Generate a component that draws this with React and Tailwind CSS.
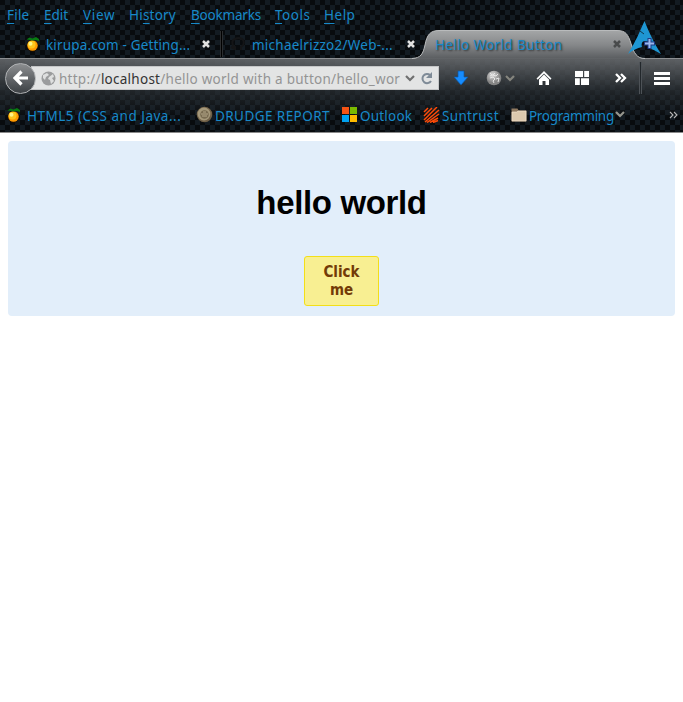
import React from "react";

const MENUS = [
  ["", "F", "ile", "w-[37px] tracking-[0.2px]"],
  ["", "E", "dit", "w-[39px]"],
  ["", "V", "iew", "w-[46px] tracking-[0.7px]"],
  ["Hi", "s", "tory", "w-[62px] tracking-[0.2px]"],
  ["", "B", "ookmarks", "w-[84px] tracking-[-0.2px]"],
  ["", "T", "ools", "w-[49px] tracking-[0.5px]"],
  ["", "H", "elp", "w-[40px] tracking-[0.5px]"],
];

function Orange() {
  return (
    <svg width="16" height="16" viewBox="0 0 16 16" className="shrink-0">
      <circle cx="6.500" cy="9.800" r="5.900" fill="#201000" />
      <circle cx="6.500" cy="9.500" r="5.200" fill="#ff9a00" />
      <circle cx="5.600" cy="8.600" r="3.900" fill="#ffc61c" />
      <circle cx="4.500" cy="7.800" r="2" fill="#fff48a" />
      <path d="M.500 3.500 3.500 1.500l3 1L10 1l3 2v2l-3-1-3 .5L4 4z" fill="#087a12" />
    </svg>
  );
}

function Close({ color }) {
  return (
    <svg width="8" height="8" viewBox="0 0 8 8" className="shrink-0">
      <path d="m1 1 6 6M7 1 1 7" stroke={color} strokeWidth="2.5" />
    </svg>
  );
}

function Chevron({ color }) {
  return (
    <svg width="10" height="7" viewBox="0 0 10 7" className="shrink-0">
      <path d="m1 1 4 4 4-4" fill="none" stroke={color} strokeWidth="2.2" />
    </svg>
  );
}

function Tabs() {
  return (
    <div className="flex h-[29px] items-center border-b border-[#8d8f91]">
      <div className="flex h-full w-[220px] items-center pl-[26px]">
        <Orange />
        <span className="ml-[4px] w-[156px] whitespace-nowrap pt-[2px] text-[13.5px] leading-[20px] tracking-[0.15px]">kirupa.com - Getting...</span>
        <Close color="#e2e2e2" />
      </div>
      <span className="h-[26px] w-[3px] border-x border-[#4a4d5099] bg-black" />
      <div className="flex h-full w-[196px] items-center pl-[7px]">
        <svg width="16" height="16" viewBox="0 0 16 16" className="shrink-0">
          <path d="M5 14v-3c-3-1-4-7 0-8 2-1 5-1 7 0 3 2 2 7-1 8v3M1 11l4 2" fill="none" stroke="#141517" strokeWidth="2" />
        </svg>
        <span className="ml-[6px] w-[155px] whitespace-nowrap pt-[2px] text-[13.5px] leading-[20px] tracking-[0.25px]">michaelrizzo2/Web-...</span>
        <Close color="#e2e2e2" />
      </div>
      <div className="relative flex h-full w-[228px] items-center pl-[16px]">
        <svg width="236" height="30" viewBox="0 0 236 30" className="absolute left-[-7px] top-0">
          <defs>
            <linearGradient id="tab" x1="0" y1="0" x2="0" y2="1">
              <stop offset="0" stopColor="#a4a6a7" />
              <stop offset=".5" stopColor="#858789" />
              <stop offset="1" stopColor="#5a5d60" stopOpacity=".95" />
            </linearGradient>
          </defs>
          <path d="M0 29C9 28 11 24 13 15 15 5 18 .5 27 .5H205c9 0 11 4 14 13 3 10 6 15 14 15.500V30H0z" fill="url(#tab)" />
          <path d="M0 28.500C9 28 11 24 13 15 15 5 18 .5 27 .5H205c9 0 11 4 14 13 3 10 6 15 14 15" fill="none" stroke="#b9bbbc" />
        </svg>
        <span className="relative w-[178px] whitespace-nowrap pt-[2px] text-[13.5px] leading-[20px] tracking-[0.36px] [text-shadow:1px_1px_2px_#303030]">Hello World Button</span>
        <span className="relative flex"><Close color="#494b4c" /></span>
        <svg width="34" height="34" viewBox="0 0 34 34" className="absolute left-[209px] top-[-9px]">
          <path d="M16.500 0c4 10 9 21 16.500 33-5-3-9-5-12-6 2-4 0-7-4-7-3 0-4 3-3 6-5 1-9 3-14 7C7 22 12 10 16.500 0z" fill="#1e96d3" />
          <path d="m12 10 4 3" stroke="#11364b" />
          <path d="M21.500 17v11M16 22.500h11" stroke="#1e3b86" strokeWidth="4" />
          <path d="M21.500 18v9M17 22.500h9" stroke="#9bb7ed" strokeWidth="2" />
        </svg>
      </div>
    </div>
  );
}

function Navigation() {
  return (
    <div className="flex h-[38px] items-center pl-[5px]">
      <span className="z-10 flex size-[31px] shrink-0 items-center justify-center rounded-full border border-[#b0b2b4] bg-linear-to-b from-[#8c8e90] to-[#3d4145]">
        <svg width="16" height="16" viewBox="0 0 16 16">
          <path d="M8.500 1.500 2 8l6.500 6.500M2.500 8H15" fill="none" stroke="#fff" strokeWidth="3.200" />
        </svg>
      </span>
      <div className="ml-[-5px] flex h-[24px] w-[408px] shrink-0 items-center border border-[#c5c6c7] bg-[#e3e4e4] pl-[9px]">
        <svg width="15" height="15" viewBox="0 0 15 15" className="shrink-0">
          <circle cx="7.500" cy="7.500" r="7" fill="#9b9c9d" />
          <path d="M2 4l4-2 2 2-3 2-1 3-2-2zM8 6l4-3 1 3-2 1 2 3-3 3-1-4-2-1z" fill="#dedfdf" />
        </svg>
        <span className="ml-[3px] w-[343px] overflow-hidden whitespace-nowrap pt-[2px] text-[13.5px] leading-[20px] tracking-[0.26px] text-[#949494]">
          http://<span className="text-[#333]">localhost</span>/hello world with a button/hello_wor
        </span>
        <span className="ml-[3px] flex"><Chevron color="#707070" /></span>
        <svg width="13" height="13" viewBox="0 0 13 13" className="ml-[5px] shrink-0">
          <path d="M10.200 3.200A4.600 4.600 0 1 0 11 9" fill="none" stroke="#7f8b97" strokeWidth="2" />
          <path d="M12 0v6H6z" fill="#7f8b97" />
        </svg>
      </div>
      <svg width="16" height="16" viewBox="0 0 16 16" className="ml-[14px] shrink-0">
        <path d="M5 1h6v6h4l-7 8-7-8h4z" fill="#168cff" stroke="#0b58a5" strokeWidth=".7" />
      </svg>
      <svg width="16" height="16" viewBox="0 0 16 16" className="ml-[17px] shrink-0">
        <defs>
          <radialGradient id="globe" cx=".4" cy=".3">
            <stop stopColor="#e0e0e0" />
            <stop offset="1" stopColor="#858585" />
          </radialGradient>
        </defs>
        <circle cx="8" cy="8" r="7.300" fill="url(#globe)" />
        <path d="m4 3 2 2-2 1m5-3-2 2 3 1 2-2M4 8l3-1 2 2-2 2 1 2m2-4 3-1-1 4" stroke="#e6e6e6" fill="none" />
      </svg>
      <span className="ml-[3px] flex"><Chevron color="#85857e" /></span>
      <svg width="16" height="16" viewBox="0 0 16 16" className="ml-[21px] shrink-0">
        <path d="m.5 8.500 7.500-7.500 7.500 7.500-1.200 1.200L8 3.500 1.700 9.700zM3 9.500l5-5 5 5V15H9.500v-4h-3v4H3z" fill="#fff" />
      </svg>
      <svg width="16" height="16" viewBox="0 0 16 16" className="ml-[22px] shrink-0">
        <path d="M1 1h8v6H1zM10.200 1H15v6h-4.800zM1 8.300h4.800V15H1zM7 8.300h8V15H7z" fill="#fff" />
      </svg>
      <svg width="14" height="12" viewBox="0 0 14 12" className="ml-[24px] shrink-0">
        <path d="m2 2 4 4-4 4m5-8 4 4-4 4" fill="none" stroke="#fff" strokeWidth="2.300" />
      </svg>
      <span className="ml-[11px] h-[32px] w-[3px] border-x border-[#6b707499] bg-[#22272b]" />
      <span className="ml-[12px] flex w-[16px] flex-col gap-[2px]">
        <span className="h-[3px] bg-white" />
        <span className="h-[3px] bg-white" />
        <span className="h-[3px] bg-white" />
      </span>
    </div>
  );
}

function Bookmarks() {
  return (
    <div className="flex h-[35px] items-center whitespace-nowrap pl-[7px] text-[13.5px] leading-[20px]">
      <Orange />
      <span className="ml-[4px] w-[169px] pt-[2px] tracking-[0.5px]">HTML5 (CSS and Java...</span>
      <svg width="17" height="17" viewBox="0 0 17 17" className="shrink-0">
        <circle cx="8.500" cy="8.500" r="7.800" fill="#706047" />
        <circle cx="8" cy="8" r="6.400" fill="#a5987a" />
        <circle cx="8.500" cy="8.500" r="4.300" fill="#786b51" />
        <path d="M5 8h7M6 10h5M7 6h3" stroke="#b5a98b" />
      </svg>
      <span className="ml-[2px] w-[127px] pt-[2px] tracking-[0.43px]">DRUDGE REPORT</span>
      <span className="grid size-[15px] shrink-0 grid-cols-2 gap-px">
        <span className="bg-[#f65314]" />
        <span className="bg-[#7cbb00]" />
        <span className="bg-[#00a1f1]" />
        <span className="bg-[#ffbb00]" />
      </span>
      <span className="ml-[3px] w-[63px] pt-[2px] tracking-[0.2px]">Outlook</span>
      <svg width="17" height="16" viewBox="0 0 17 16" className="shrink-0">
        <path d="M1 13 14 0M1 9 9 1M1 5l4-4M2 15 16 3M4 15.500 16 7M7 15.500l8-4.500M10 15.500l5-2" fill="none" stroke="#ff4b08" strokeWidth="1.500" />
      </svg>
      <span className="ml-[2px] w-[69px] pt-[2px] tracking-[0.33px]">Suntrust</span>
      <svg width="16" height="16" viewBox="0 0 16 16" className="shrink-0">
        <path d="M.5 1.500h6l1 2h8v11H.5z" fill="#8f7960" />
        <path d="M1 5h5l1-1h8v10H1z" fill="#dcc8ad" stroke="#f0e1cc" strokeWidth=".7" />
      </svg>
      <span className="ml-[2px] w-[86px] pt-[2px] tracking-[-0.3px]">Programming</span>
      <span className="flex"><Chevron color="#96968e" /></span>
      <svg width="9" height="8" viewBox="0 0 9 8" className="ml-[44px] shrink-0">
        <path d="m1 1 3 3-3 3m4-6 3 3-3 3" fill="none" stroke="#b6b6b6" strokeWidth="1.100" />
      </svg>
    </div>
  );
}

export default function App() {
  return (
    <div className="h-[702px] w-[683px] overflow-hidden bg-white font-['Noto_Sans','Open_Sans',sans-serif] text-[#1789c9]">
      <header className="h-[133px] border-b border-[#8b8b8b] bg-[conic-gradient(#131b22_25%,#080b0e_0_50%,#131b22_0_75%,#080b0e_0)] bg-size-[10px_10px]">
        <nav className="flex h-[30px] pl-[7px] pt-[5px] text-[13.5px] leading-[20px]">
          {MENUS.map(([before, key, after, width]) => (
            <span key={key + after} className={`shrink-0 ${width}`}>
              {before}<span className="underline underline-offset-[3px]">{key}</span>{after}
            </span>
          ))}
        </nav>
        <Tabs />
        <div className="h-[73px] bg-linear-to-b from-[#686b6ee0] from-0% via-[#2b3034aa] via-45% to-transparent to-80%">
          <Navigation />
          <Bookmarks />
        </div>
      </header>
      <main className="mx-2 mt-2 flex h-[175px] flex-col items-center rounded-[4px] bg-[#e2eefa]">
        <h1 className="mt-[44px] whitespace-nowrap font-['Liberation_Sans',sans-serif] text-[33px] font-bold leading-[36px] tracking-[-0.35px] text-black">hello world</h1>
        <button className="mt-[35px] h-[50px] w-[75px] rounded-[3px] border border-[#f3df18] bg-[#f8ef92] px-[15px] pb-px font-['DejaVu_Sans_Condensed','DejaVu_Sans',sans-serif] text-[15px] font-bold leading-[18px] text-[#733b07]">Click me</button>
      </main>
    </div>
  );
}
